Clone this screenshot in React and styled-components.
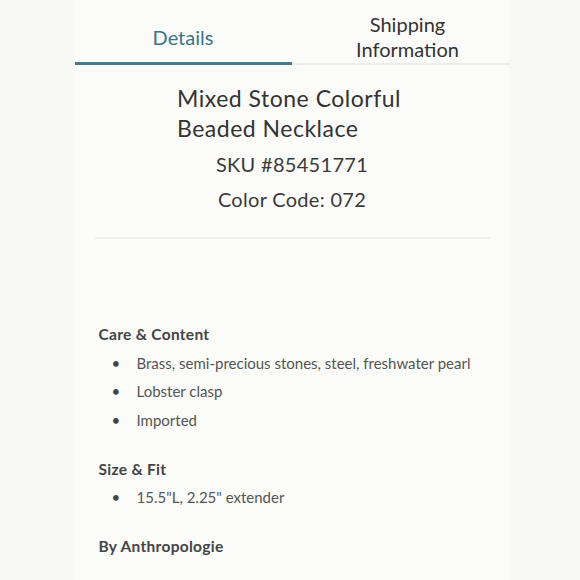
import React from 'react'
import styled, { createGlobalStyle } from 'styled-components'

const GlobalStyle = createGlobalStyle`
  html, body {
    margin: 0;
    padding: 0;
    background: #f8f8f5;
  }
`

const Page = styled.div`
  min-height: 580px;
  display: flex;
  justify-content: center;
  background: #f8f8f5;
  font-family: 'Lato', 'Noto Sans', sans-serif;
`

const Panel = styled.div`
  width: 435px;
  margin-left: 4px;
  background: #fbfbf9;
  display: flex;
  flex-direction: column;
`

const Tabs = styled.div`
  display: grid;
  grid-template-columns: 217px 1fr;
  padding-top: 12px;
`

const Tab = styled.div`
  height: 50px;
  display: flex;
  align-items: center;
  justify-content: center;
  text-align: center;
  font-size: 20px;
  line-height: 25px;
  color: ${p => (p.$active ? '#3b7586' : '#333')};
  border-bottom: ${p => (p.$active ? '3px solid #457b8b' : '2px solid #ececea')};
  padding-bottom: ${p => (p.$active ? '0' : '1px')};
  padding-left: ${p => (p.$active ? '0' : '14px')};
`

const Info = styled.div`
  display: flex;
  flex-direction: column;
  align-items: center;
  padding-top: 18px;
`

const Title = styled.h1`
  margin: 0 6px 4px 0;
  font-size: 23px;
  font-weight: 400;
  letter-spacing: 0.5px;
  line-height: 30px;
  color: #333;
  text-align: left;
`

const Meta = styled.div`
  font-size: 20px;
  line-height: 35px;
  color: #3a3a3a;
  letter-spacing: 0.3px;
`

const Divider = styled.hr`
  margin: 20px 20px 0;
  border: none;
  border-top: 2px solid #efefec;
`

const Sections = styled.div`
  padding: 85px 24px 0;
  display: flex;
  flex-direction: column;
  gap: 29px;
`

const Heading = styled.h2`
  margin: 0;
  font-size: 15.5px;
  font-weight: 700;
  letter-spacing: 0.3px;
  line-height: 20px;
  color: #444;
`

const List = styled.ul`
  list-style: none;
  margin: 0;
  padding: 0 0 0 13px;
`

const Item = styled.li`
  display: flex;
  margin-top: 8.5px;
  font-size: 15px;
  line-height: 20px;
  color: #555;

  &::before {
    content: '•';
    width: 25px;
    flex: none;
    color: #444;
  }
`

const sections = [
  {
    title: 'Care & Content',
    items: ['Brass, semi-precious stones, steel, freshwater pearl', 'Lobster clasp', 'Imported'],
  },
  { title: 'Size & Fit', items: ['15.5"L, 2.25" extender'] },
  { title: 'By Anthropologie', items: [] },
]

export default function App() {
  return (
    <>
      <GlobalStyle />
      <Page>
        <Panel>
          <Tabs>
            <Tab $active>Details</Tab>
            <Tab>
              Shipping
              <br />
              Information
            </Tab>
          </Tabs>
          <Info>
            <Title>
              Mixed Stone Colorful
              <br />
              Beaded Necklace
            </Title>
            <Meta>SKU #85451771</Meta>
            <Meta>Color Code: 072</Meta>
          </Info>
          <Divider />
          <Sections>
            {sections.map(s => (
              <div key={s.title}>
                <Heading>{s.title}</Heading>
                {s.items.length > 0 && (
                  <List>
                    {s.items.map(i => (
                      <Item key={i}>{i}</Item>
                    ))}
                  </List>
                )}
              </div>
            ))}
          </Sections>
        </Panel>
      </Page>
    </>
  )
}
